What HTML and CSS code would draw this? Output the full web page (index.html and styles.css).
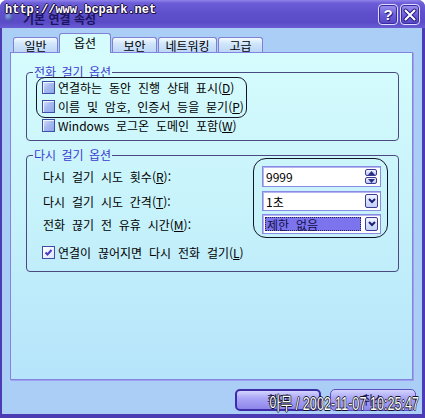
FILE: index.html
```html
<!DOCTYPE html>
<html lang="ko">
<head>
<meta charset="utf-8">
<title>속성</title>
<link rel="stylesheet" href="styles.css">
</head>
<body>
<div class="window">
  <div class="titlebar">
    <span class="app-icon"></span>
    <span class="title">기본 연결 속성</span>
    <div class="caption-buttons">
      <span class="cap-btn">?</span>
      <span class="cap-btn">
        <svg width="14" height="14" viewBox="0 0 14 14"><path d="M2.5 2.5 L11.5 11.5 M11.5 2.5 L2.5 11.5" stroke="#2a1c80" stroke-width="4" stroke-linecap="round"/><path d="M2.5 2.5 L11.5 11.5 M11.5 2.5 L2.5 11.5" stroke="#fff" stroke-width="2" stroke-linecap="round"/></svg>
      </span>
    </div>
    <span class="wm-url">http://www.bcpark.net</span>
  </div>
  <div class="frame">
    <div class="tabs">
      <div class="tab tab-w46">일반</div>
      <div class="tab active tab-w51">옵션</div>
      <div class="tab tab-w45">보안</div>
      <div class="tab tab-w59">네트워킹</div>
      <div class="tab tab-w46">고급</div>
    </div>
    <div class="panel">
      <fieldset class="group group-dial">
        <legend>전화 걸기 옵션</legend>
        <div class="check-row"><span class="checkbox"></span>연결하는 동안 진행 상태 표시(<u>D</u>)</div>
        <div class="check-row"><span class="checkbox"></span>이름 및 암호, 인증서 등을 묻기(<u>P</u>)</div>
        <div class="check-row"><span class="checkbox"></span>Windows 로그온 도메인 포함(<u>W</u>)</div>
      </fieldset>
      <fieldset class="group group-redial">
        <legend>다시 걸기 옵션</legend>
        <div class="field-row row-spin">
          <span class="field-label">다시 걸기 시도 횟수(<u>R</u>):</span>
          <div class="input spin">
            <span class="value">9999</span>
            <span class="spin-btns">
              <span class="spin-btn"><svg width="7" height="4" viewBox="0 0 7 4"><path d="M0 4 L3.5 0 L7 4Z" fill="#2c2c80"/></svg></span>
              <span class="spin-btn"><svg width="7" height="4" viewBox="0 0 7 4"><path d="M0 0 L3.5 4 L7 0Z" fill="#2c2c80"/></svg></span>
            </span>
          </div>
        </div>
        <div class="field-row row-combo1">
          <span class="field-label">다시 걸기 시도 간격(<u>T</u>):</span>
          <div class="input combo">
            <span class="value">1초</span>
            <span class="drop-btn"><svg width="8" height="6" viewBox="0 0 8 6"><path d="M1 1 L4 4 L7 1" fill="none" stroke="#1e1e78" stroke-width="2"/></svg></span>
          </div>
        </div>
        <div class="field-row row-combo2">
          <span class="field-label">전화 끊기 전 유휴 시간(<u>M</u>):</span>
          <div class="input combo">
            <span class="value selected">제한 없음</span>
            <span class="drop-btn"><svg width="8" height="6" viewBox="0 0 8 6"><path d="M1 1 L4 4 L7 1" fill="none" stroke="#1e1e78" stroke-width="2"/></svg></span>
          </div>
        </div>
        <div class="check-row row-redial"><span class="checkbox checked"><svg width="9" height="9" viewBox="0 0 9 9"><path d="M1.5 4.5 L3.5 6.5 L7.5 2" fill="none" stroke="#4a3cc4" stroke-width="2"/></svg></span>연결이 끊어지면 다시 전화 걸기(<u>L</u>)</div>
      </fieldset>
    </div>
    <div class="buttons">
      <span class="btn btn-default">확인</span>
      <span class="btn">취소</span>
    </div>
  </div>
  <div class="annot annot-1"></div>
  <div class="annot annot-2"></div>
  <div class="wm-date">아무 / 2002-11-07 10:25:47</div>
</div>
</body>
</html>
```
FILE: styles.css
```css
html, body {
  margin: 0;
  padding: 0;
  background: #ffffff;
}
body {
  font-family: "Noto Sans CJK KR", "Noto Sans", sans-serif;
  font-size: 12px;
  color: #000;
  word-spacing: 3.5px;
}
.window {
  position: relative;
  width: 425px;
  height: 418px;
  display: flex;
  flex-direction: column;
  border-radius: 7px 7px 0 0;
  overflow: hidden;
  background: #4c3cb4;
}
.titlebar {
  position: relative;
  height: 28px;
  flex: none;
  display: flex;
  align-items: center;
  background: linear-gradient(to bottom, #9284ec 0, #6c5ed8 3px, #5e50ca 45%, #5a4cc6 80%, #6a5cd4 100%);
}
.app-icon {
  width: 8px;
  height: 8px;
  margin: 6px 0 0 5px;
  border-radius: 50%;
  background: radial-gradient(circle at 35% 35%, #8aa0e8, #2c3a90);
}
.title {
  margin: 8px 0 0 10px;
  color: #1c1460;
  font-size: 12px;
  font-weight: bold;
  word-spacing: 0;
}
.caption-buttons {
  margin-left: auto;
  margin-right: 5px;
  margin-top: 1px;
  display: flex;
  gap: 2px;
}
.cap-btn {
  width: 20px;
  height: 21px;
  box-sizing: border-box;
  display: flex;
  align-items: center;
  justify-content: center;
  border: 1px solid #e0dcff;
  border-radius: 4px;
  background: linear-gradient(to bottom, #9c92f0, #6a5cd8 55%, #5646c4);
  box-shadow: inset 0 0 0 1px #3a2ca0;
  color: #fff;
  font-family: "Liberation Sans", sans-serif;
  font-weight: bold;
  font-size: 15px;
  text-shadow: 0 0 1px #2a1c80, 1px 1px 0 #2a1c80;
}
.wm-url {
  position: absolute;
  left: 5px;
  top: 3px;
  font-family: "Liberation Mono", monospace;
  font-weight: bold;
  font-size: 12px;
  word-spacing: 0;
  color: #fff;
  text-shadow: 1px 0 0 #201048, -1px 0 0 #201048, 0 1px 0 #201048, 0 -1px 0 #201048, 1px 1px 0 #201048;
}
.frame {
  flex: 1;
  display: flex;
  flex-direction: column;
  background: #aacef6;
  margin: 0 3px 4px 2px;
}
.tabs {
  display: flex;
  align-items: flex-end;
  height: 24px;
  margin-left: 11px;
  position: relative;
  z-index: 1;
}
.tab {
  height: 15px;
  box-sizing: border-box;
  display: flex;
  align-items: center;
  justify-content: center;
  border: 1px solid #8080d4;
  border-bottom: none;
  border-radius: 3px 3px 0 0;
  background: linear-gradient(to bottom, #f4fbff, #d0e6fb 40%, #bcd6f6);
  line-height: 12px;
  margin-right: 1px;
  padding-top: 2px;
}
.tab.active {
  background: #d6fbfd;
  margin-bottom: -1px;
  height: 20px;
  padding-bottom: 3px;
}
.tab-w46 { width: 45px; }
.tab-w51 { width: 52px; }
.tab-w45 { width: 45px; }
.tab-w59 { width: 59px; }
.panel {
  margin-left: 8px;
  width: 403px;
  height: 328px;
  box-sizing: border-box;
  border: 1px solid #8484e0;
  box-shadow: 1px 1px 0 #9ea2ee;
  background: linear-gradient(to bottom, #d6fcfd, #c6f2fb 50%, #b6e4fa);
  display: flex;
  flex-direction: column;
}
.group {
  margin: 0 0 0 15px;
  width: 373px;
  box-sizing: border-box;
  border: 1px solid #4a4a80;
  border-radius: 4px;
  min-width: 0;
}
.group legend {
  padding: 0 1px;
  line-height: 12px;
  color: #3c3cd0;
  word-spacing: 2px;
}
.group-dial {
  margin-top: 13px;
  padding: 0 0 5px 15px;
}
.group-dial legend {
  margin-left: -9px;
}
.group-redial {
  margin-top: 8px;
  padding: 0 17px 10px 16px;
}
.group-redial legend {
  margin-left: -10px;
}
.check-row {
  height: 19px;
  display: flex;
  align-items: center;
  white-space: pre;
}
.checkbox {
  width: 13px;
  height: 13px;
  box-sizing: border-box;
  flex: none;
  margin-right: 3px;
  border: 1px solid #3c4ea8;
  background: linear-gradient(135deg, #dce6fb 0, #a8bcf0 45%, #8ea6e8 100%);
  box-shadow: inset 1px 1px 0 #f0f4ff;
  display: flex;
  align-items: center;
  justify-content: center;
}
.checkbox.checked {
  background: linear-gradient(135deg, #ffffff, #dfe6fb);
  box-shadow: none;
}
.field-row {
  display: flex;
  align-items: center;
  justify-content: space-between;
}
.row-spin { margin-top: 5px; height: 21px; }
.row-combo1 { margin-top: 4px; height: 20px; }
.row-combo2 { margin-top: 3px; height: 20px; }
.row-redial { margin-top: 9px; height: 18px; margin-left: -1px; }
.input {
  width: 119px;
  height: 100%;
  box-sizing: border-box;
  border: 1px solid #8a8ae4;
  box-shadow: inset 1px 1px 0 #b4b4f0;
  background: #fff;
  display: flex;
  align-items: center;
  padding: 2px;
}
.input .value {
  flex: 1;
  height: 100%;
  display: flex;
  align-items: center;
  padding-left: 1px;
}
.input .value.selected {
  background: #7c74ec;
  outline: 1px dotted #20205a;
  outline-offset: -1px;
  color: #10104a;
  padding-left: 2px;
  margin-right: 4px;
}
.spin-btns {
  display: flex;
  flex-direction: column;
  gap: 1px;
  margin-right: 1px;
}
.spin-btn {
  width: 12px;
  height: 7px;
  box-sizing: border-box;
  border: 1px solid #3c3c98;
  border-radius: 2px;
  background: linear-gradient(to bottom, #f0f4ff, #b8c8f4);
  display: flex;
  align-items: center;
  justify-content: center;
}
.drop-btn {
  width: 13px;
  height: 14px;
  box-sizing: border-box;
  border: 1px solid #3c3c98;
  border-radius: 2px;
  background: linear-gradient(to bottom, #f0f4ff, #c0cef6);
  display: flex;
  align-items: center;
  justify-content: center;
}
.buttons {
  display: flex;
  justify-content: flex-end;
  gap: 9px;
  margin-top: 9px;
  margin-right: 6px;
}
.btn {
  width: 86px;
  height: 22px;
  box-sizing: border-box;
  display: flex;
  align-items: flex-start;
  justify-content: center;
  padding-top: 1px;
  border: 1px solid #5a50c4;
  border-radius: 5px;
  background: linear-gradient(to bottom, #d4d4fe 0, #aaa6f6 40%, #8e86ea 100%);
  color: #1a1450;
}
.btn-default {
  border: 2px solid #3c2ea8;
  padding-top: 0;
}
.annot {
  position: absolute;
  border: 1.5px solid #141428;
  box-sizing: border-box;
}
.annot-1 {
  left: 36px;
  top: 77px;
  width: 211px;
  height: 41px;
  border-radius: 9px;
}
.annot-2 {
  left: 253px;
  top: 158px;
  width: 135px;
  height: 80px;
  border-radius: 13px;
}
.wm-date {
  position: absolute;
  right: 6px;
  bottom: 5px;
  font-family: "Liberation Sans", "Noto Sans CJK KR", sans-serif;
  font-size: 18px;
  line-height: 18px;
  word-spacing: 0;
  color: #fff;
  white-space: nowrap;
  transform: scaleX(0.7);
  transform-origin: right bottom;
  text-shadow: 1px 0 0 #101020, -1px 0 0 #101020, 0 1px 0 #101020, 0 -1px 0 #101020;
}
```
